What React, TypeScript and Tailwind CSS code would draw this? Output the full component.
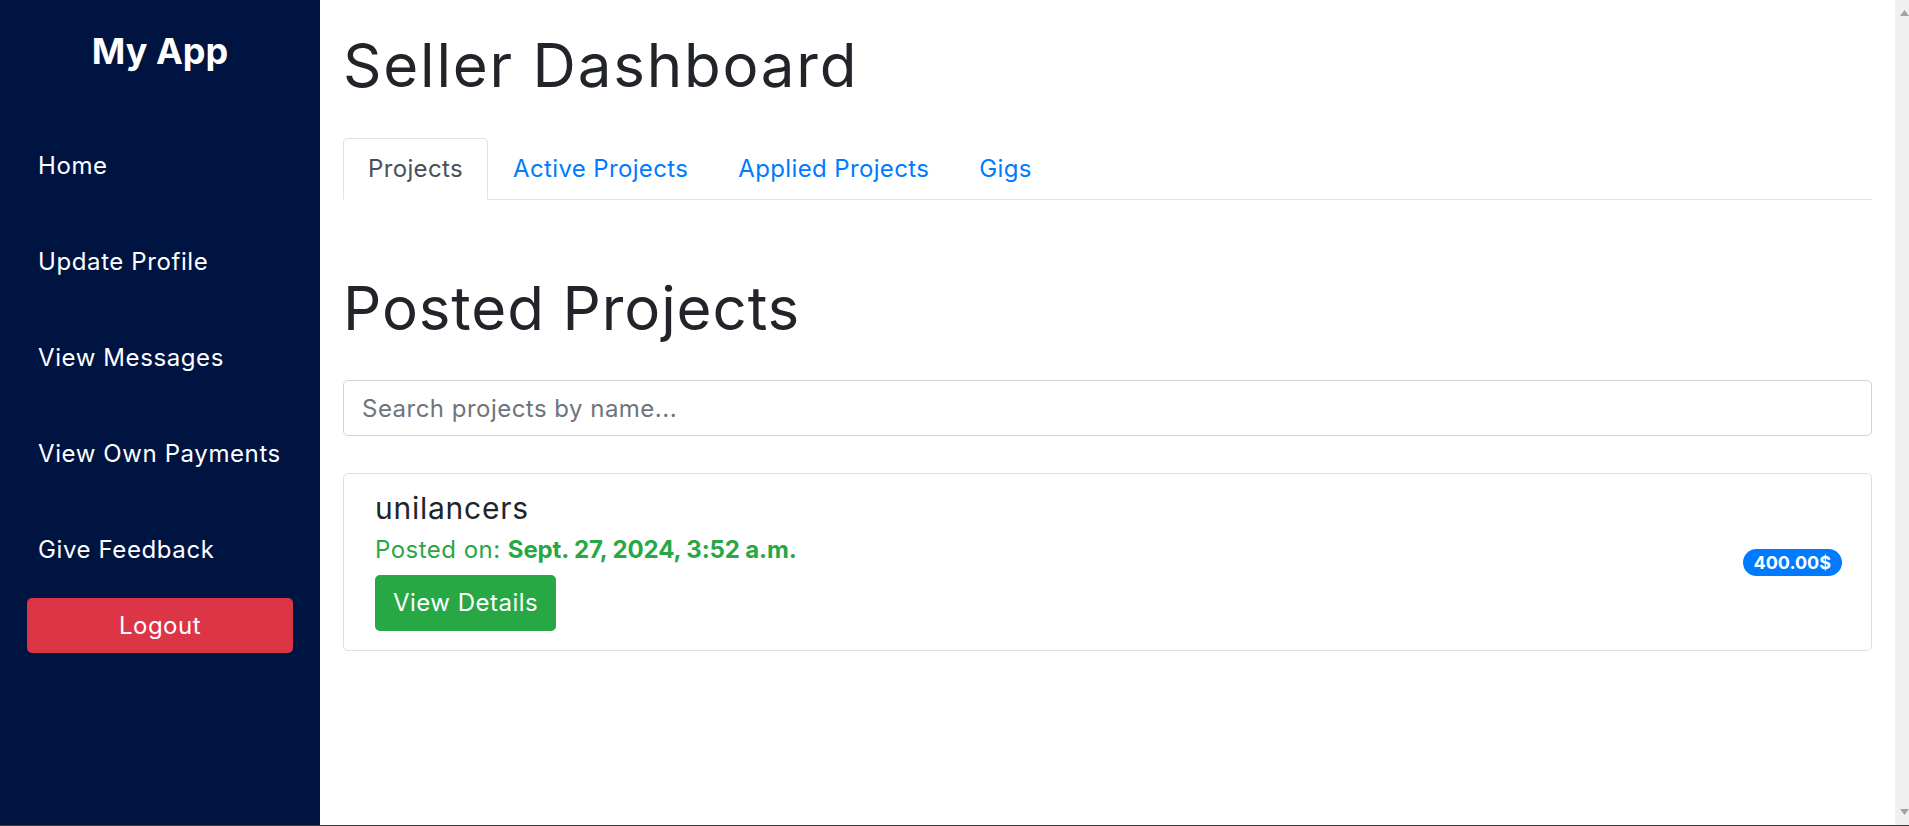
import { useState } from 'react';

const navLinks = ['Home', 'Update Profile', 'View Messages', 'View Own Payments', 'Give Feedback'];
const tabs = ['Projects', 'Active Projects', 'Applied Projects', 'Gigs'];

function Sidebar() {
  return (
    <aside className="flex w-[320px] shrink-0 flex-col bg-[#001442] text-white">
      <h2 className="mt-[28px] text-center text-[36px] font-bold leading-[46px]">My App</h2>

      <nav className="mt-[44px] flex flex-col">
        {navLinks.map((link) => (
          <a key={link} href="#" className="flex h-[96px] items-center pl-[38px] text-[24px] tracking-[0.025em]">
            {link}
          </a>
        ))}
      </nav>

      <button
        type="button"
        className="mx-[27px] h-[55px] rounded-[5px] bg-[#dc3545] text-[24px] tracking-[0.02em] text-white"
      >
        Logout
      </button>
    </aside>
  );
}

function Tabs() {
  const [active, setActive] = useState('Projects');

  return (
    <div className="mt-[37px] flex border-b border-[#dee2e6]">
      {tabs.map((tab) => (
        <button
          key={tab}
          type="button"
          onClick={() => setActive(tab)}
          className={
            tab === active
              ? '-mb-px h-[62px] rounded-t-[5px] border border-[#dee2e6] border-b-white bg-white px-[24px] text-[24px] tracking-[0.015em] text-[#495057]'
              : '-mb-px h-[62px] border border-transparent px-[24px] text-[24px] tracking-[0.015em] text-[#007bff]'
          }
        >
          {tab}
        </button>
      ))}
    </div>
  );
}

export default function App() {
  return (
    <div className="flex h-screen flex-col font-['Inter',sans-serif] text-[#212529]">
      <div className="flex min-h-0 flex-1">
        <Sidebar />

        <main className="flex-1 pl-[23px] pr-[23px]">
          <h1 className="mt-[29px] text-[60px] leading-[72px] tracking-[0.03em]">Seller Dashboard</h1>

          <Tabs />

          <h1 className="mt-[72px] text-[60px] leading-[72px] tracking-[0.015em]">Posted Projects</h1>

          <input
            type="text"
            placeholder="Search projects by name..."
            className="mt-[36px] h-[56px] w-full rounded-[5px] border border-[#ced4da] px-[18px] text-[24px] tracking-[0.02em] placeholder:text-[#6c757d]"
          />

          <div className="mt-[37px] flex h-[178px] items-center rounded-[5px] border border-[#dfdfdf] pl-[31px] pr-[29px]">
            <div className="flex-1 self-start pt-[16px]">
              <h5 className="text-[30px] leading-[36px] tracking-[0.025em]">unilancers</h5>
              <p className="mt-[6px] text-[24px] leading-[36px] tracking-[0.02em] text-[#28a745]">
                Posted on: <span className="font-bold tracking-[-0.005em]">Sept. 27, 2024, 3:52 a.m.</span>
              </p>
              <button
                type="button"
                className="mt-[7px] h-[56px] rounded-[5px] bg-[#28a745] px-[18px] text-[24px] tracking-[0.02em] text-white"
              >
                View Details
              </button>
            </div>
            <span className="flex h-[27px] items-center rounded-full bg-[#007bff] px-[11px] text-[18px] font-bold text-white">
              400.00$
            </span>
          </div>
        </main>

        <div className="flex w-[14px] shrink-0 flex-col justify-between bg-[#f0f0f0] py-[10px] pl-[5px]">
          <svg width="9" height="6" viewBox="0 0 9 6">
            <path d="M4.5 0 L9 6 L0 6 Z" fill="#a3a3a3" />
          </svg>
          <svg width="9" height="6" viewBox="0 0 9 6">
            <path d="M0 0 L9 0 L4.5 6 Z" fill="#a3a3a3" />
          </svg>
        </div>
      </div>
      <div className="h-px bg-[#3d3a3f]" />
    </div>
  );
}
